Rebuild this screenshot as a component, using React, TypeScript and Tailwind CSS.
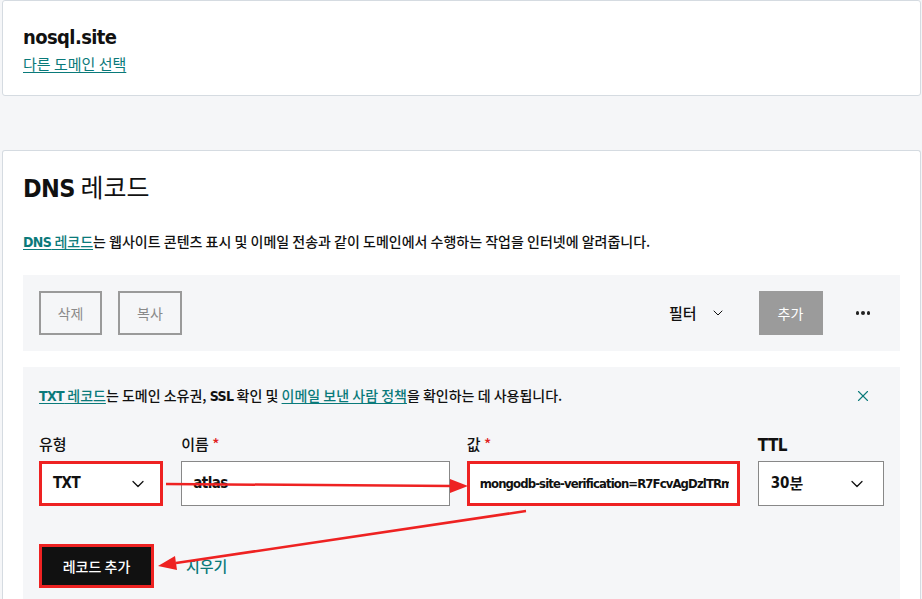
import { ChevronDown, X } from "lucide-react";

const font = { fontFamily: '"Noto Sans CJK KR", sans-serif' };
const cond = "font-['DejaVu_Sans_Condensed','Liberation_Sans_Narrow','Liberation_Sans',sans-serif] font-bold tracking-[-0.6px]";
const condPlain = "font-['DejaVu_Sans_Condensed','Liberation_Sans_Narrow','Liberation_Sans',sans-serif] font-bold";

export default function App() {
  return (
    <div className="relative min-h-[599px] w-[922px] overflow-hidden bg-[#f5f6f8] pl-[2px] pr-[1px] text-[#111]" style={font}>
      <div className="h-[96px] rounded-[3px] border border-[#d5dbe1] bg-white px-[20px] pt-[22px]">
        <div className={`text-[20px] leading-[28px] ${cond}`}>nosql.site</div>
        <a className="text-[15px] leading-[20px] text-[#0a7a7a] underline underline-offset-2">다른 도메인 선택</a>
      </div>

      <div className="mt-[54px] h-[460px] rounded-t-[3px] border border-b-0 border-[#d5dbe1] bg-white px-[20px] pt-[19px]">
        <h1 className="text-[25px] leading-[32px] font-normal">
          <span className={cond}>DNS</span> 레코드
        </h1>
        <p className="mt-[26px] text-[14px] leading-[20px] font-medium">
          <a className="text-[#0a7a7a] underline underline-offset-2">
            <span className={cond}>DNS</span> 레코드
          </a>
          는 웹사이트 콘텐츠 표시 및 이메일 전송과 같이 도메인에서 수행하는 작업을 인터넷에 알려줍니다.
        </p>

        <div className="mt-[23px] flex h-[76px] items-center bg-[#f5f6f8] pl-[16px] pr-[30px]">
          <button className="h-[44px] w-[63px] border-2 border-[#9a9a9a] text-[14px] text-[#8a8a8a]">삭제</button>
          <button className="ml-[16px] h-[44px] w-[64px] border-2 border-[#9a9a9a] text-[14px] text-[#8a8a8a]">복사</button>
          <div className="ml-auto flex items-center gap-[13px] text-[15px] font-medium">
            필터 <ChevronDown size={16} strokeWidth={1.5} />
          </div>
          <button className="ml-[33px] h-[44px] w-[64px] bg-[#9b9b9b] text-[14px] text-white">추가</button>
          <div className="ml-[33px] flex gap-[2px]">
            <span className="h-[3.5px] w-[3.5px] rounded-full bg-[#222]" />
            <span className="h-[3.5px] w-[3.5px] rounded-full bg-[#222]" />
            <span className="h-[3.5px] w-[3.5px] rounded-full bg-[#222]" />
          </div>
        </div>

        <div className="mt-[16px] h-[240px] bg-[#f5f6f8] px-[16px] pt-[16px]">
          <div className="flex items-center justify-between">
            <p className="text-[14px] leading-[24px] font-medium">
              <a className="text-[#0a7a7a] underline underline-offset-2">
                <span className={cond}>TXT</span> 레코드
              </a>
              는 도메인 소유권, <span className={cond}>SSL</span> 확인 및{" "}
              <a className="text-[#0a7a7a] underline underline-offset-2">이메일 보낸 사람 정책</a>을 확인하는 데 사용됩니다.
            </p>
            <X size={18} strokeWidth={1.5} className="mr-[12px] text-[#0a7a7a]" />
          </div>

          <div className="mt-[25px] flex gap-[18px]">
            <div className="w-[125px]">
              <div className="h-[28px] text-[15px] font-medium">유형</div>
              <div className="flex h-[45px] items-center justify-between border border-[#888] bg-white pl-[13px] pr-[14px] outline-[3px] outline-[#ee2222] outline-offset-[-3px]">
                <span className={`text-[15px] ${cond}`}>TXT</span>
                <ChevronDown size={20} strokeWidth={1.5} />
              </div>
            </div>
            <div className="w-[270px]">
              <div className="h-[28px] text-[15px] font-medium">
                이름 <span className="text-[#e02020]">*</span>
              </div>
              <div className="flex h-[45px] items-center border border-[#888] bg-white pl-[11px]">
                <span className={`text-[15px] ${cond}`}>atlas</span>
              </div>
            </div>
            <div className="ml-[-1px] w-[273px]">
              <div className="h-[28px] text-[15px] font-medium">
                값 <span className="text-[#e02020]">*</span>
              </div>
              <div className="flex h-[45px] items-center overflow-hidden border-[3px] border-[#ee2222] bg-white pl-[10px] pr-[8px]">
                <span className={`overflow-hidden whitespace-nowrap text-[13px] ${condPlain} tracking-[-0.9px]`}>
                  mongodb-site-verification=R7FcvAgDzlTRm0
                </span>
              </div>
            </div>
            <div className="w-[127px]">
              <div className={`h-[28px] text-[17px] ${cond}`}>TTL</div>
              <div className="flex h-[45px] items-center justify-between border border-[#888] bg-white pl-[12px] pr-[16px]">
                <span className="flex text-[15px] font-bold">
                  <span className={condPlain}>30</span>
                  <span>분</span>
                </span>
                <ChevronDown size={20} strokeWidth={1.5} />
              </div>
            </div>
          </div>

          <div className="mt-[38px] flex items-center gap-[32px]">
            <button className="h-[44px] w-[115px] border-[3px] border-[#ee2222] bg-[#111] text-[14px] font-medium text-white">
              레코드 추가
            </button>
            <a className="text-[15px] font-medium text-[#0a7a7a]">지우기</a>
          </div>
        </div>
      </div>

      <svg className="pointer-events-none absolute left-0 top-0" width="922" height="599">
        <line x1="166" y1="484" x2="452" y2="486" stroke="#ee2222" strokeWidth="2.5" />
        <polygon points="468,486 450,479 450,493" fill="#ee2222" />
        <line x1="526" y1="511" x2="176" y2="563" stroke="#ee2222" strokeWidth="2.5" />
        <polygon points="158,566 175,556 177,570" fill="#ee2222" />
      </svg>
    </div>
  );
}
